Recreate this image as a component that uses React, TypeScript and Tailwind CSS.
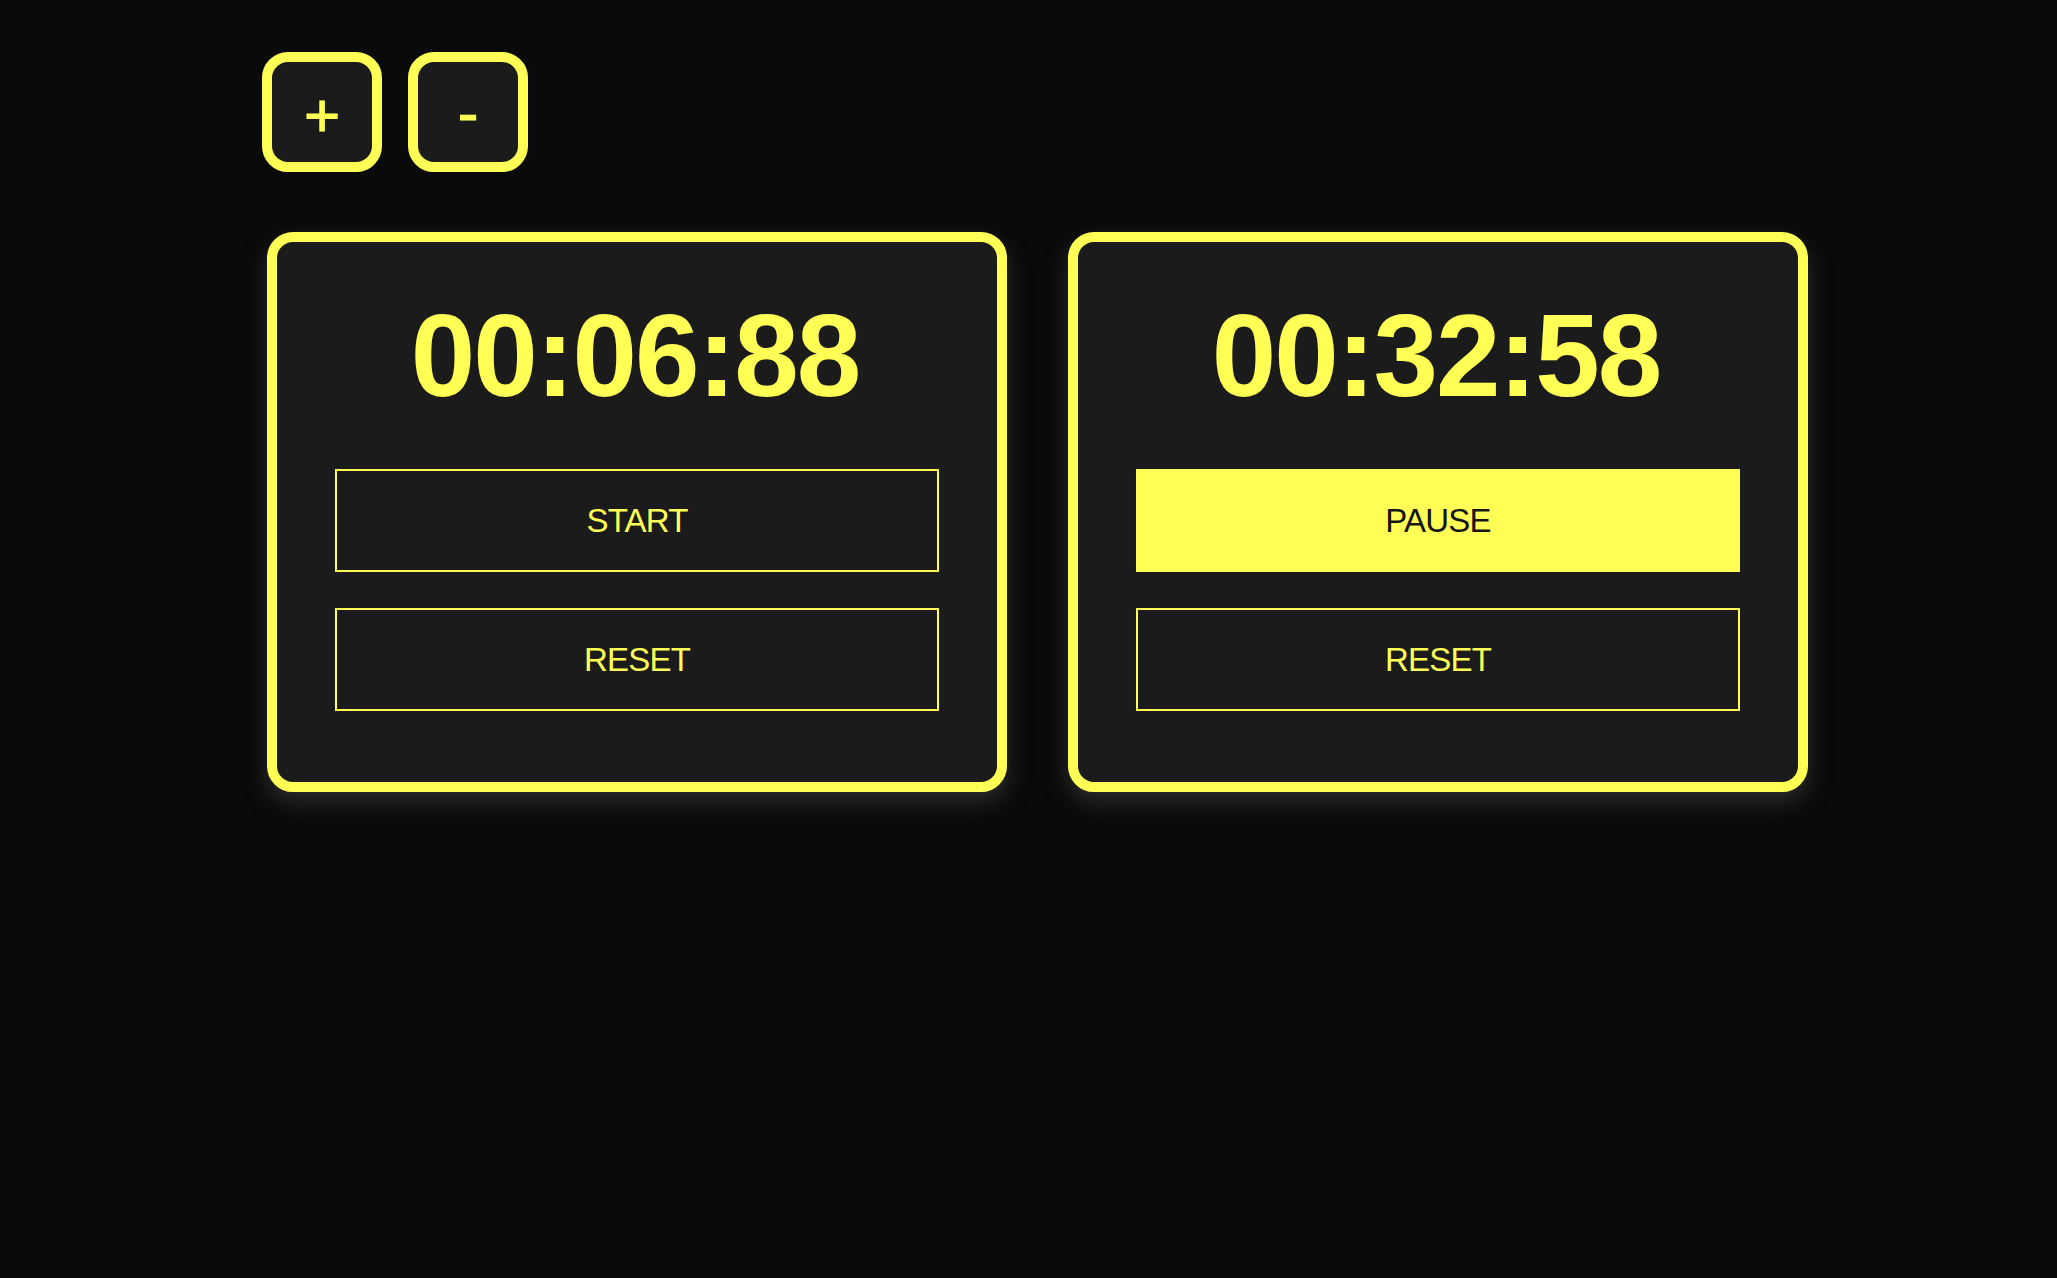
import { useState } from "react";

type Timer = { id: number; time: string; running: boolean };

const initial: Timer[] = [
	{ id: 1, time: "00:06:88", running: false },
	{ id: 2, time: "00:32:58", running: true },
];

function StopwatchCard({ timer }: { timer: Timer }) {
	return (
		<div className="flex w-[740px] flex-col rounded-[26px] border-[10px] border-[#ffff55] bg-[#1b1b1b] px-[58px] pt-[56px] pb-[71px] shadow-[0_10px_22px_rgba(48,48,48,0.9)]">
			<div className="pr-[4px] text-center text-[116px] leading-none font-bold tracking-[-2px] text-[#ffff55]">
				{timer.time}
			</div>
			<div className="mt-[55px] flex flex-col gap-[36px]">
				{timer.running ? (
					<button className="flex h-[103px] items-center justify-center border-2 border-[#ffff55] bg-[#ffff55] text-[33px] tracking-[-0.8px] text-[#151515]">
						PAUSE
					</button>
				) : (
					<button className="flex h-[103px] items-center justify-center border-2 border-[#ffff55] text-[33px] tracking-[-0.8px] text-[#ffff55]">
						START
					</button>
				)}
				<button className="flex h-[103px] items-center justify-center border-2 border-[#ffff55] text-[33px] tracking-[-0.8px] text-[#ffff55]">
					RESET
				</button>
			</div>
		</div>
	);
}

export default function App() {
	const [timers] = useState(initial);

	return (
		<div className="min-h-[1278px] bg-[#0a0a0a] pt-[52px] pl-[262px] font-['Liberation_Sans',Arial,sans-serif]">
			<div className="flex gap-[26px]">
				<button className="flex h-[120px] w-[120px] items-center justify-center rounded-[26px] border-[10px] border-[#ffff55] bg-[#1b1b1b] pt-[6px] text-[62px] leading-none text-[#ffff55] [-webkit-text-stroke:1px_#ffff55]">
					+
				</button>
				<button className="flex h-[120px] w-[120px] items-center justify-center rounded-[26px] border-[10px] border-[#ffff55] bg-[#1b1b1b] pt-[2px] text-[62px] leading-none text-[#ffff55] [-webkit-text-stroke:1px_#ffff55]">
					-
				</button>
			</div>
			<div className="mt-[60px] ml-[5px] flex gap-[61px]">
				{timers.map((t) => (
					<StopwatchCard key={t.id} timer={t} />
				))}
			</div>
		</div>
	);
}
